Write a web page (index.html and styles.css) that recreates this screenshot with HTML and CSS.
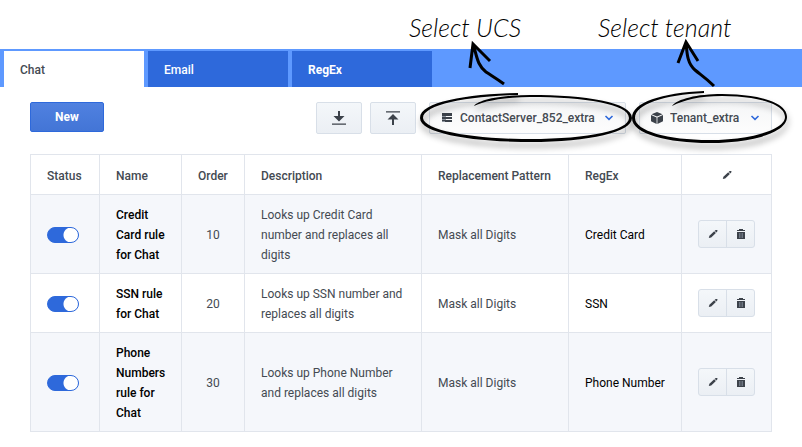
FILE: index.html
```html
<!DOCTYPE html>
<html lang="en">
<head>
  <meta charset="UTF-8">
  <meta name="viewport" content="width=device-width, initial-scale=1.0">
  <title>Masking Rules</title>
  <link rel="stylesheet" href="styles.css">
</head>
<body>
  <!-- Shared icons -->
  <svg class="sprite" aria-hidden="true">
    <symbol id="pencil" viewBox="0 0 10 10">
      <path d="M.8 9 L1.4 6.800 L6.200 2.200 L7.900 3.900 L3.200 8.400 Z M6.700 1.800 L7.800 .9 L9.400 .9 L9.400 2.300 L8.300 3.400 Z"/>
    </symbol>
    <symbol id="trash" viewBox="0 0 10 12">
      <path d="M3 1h4v1h2v1H1V2h2z"/>
      <path d="M1 4h8v7H1z"/>
      <path d="M3.500 5v5 M5 5v5 M6.500 5v5" stroke="#8d99a6" stroke-width=".6"/>
    </symbol>
    <symbol id="chevron" viewBox="0 0 10 8">
      <path d="M1.500 2 L5 5.300 L8.500 2" fill="none" stroke="#2e69db" stroke-width="1.600"/>
    </symbol>
  </svg>

  <nav class="tabs">
    <a class="tab active" href="#chat">Chat</a>
    <a class="tab" href="#email">Email</a>
    <a class="tab strong" href="#regex">RegEx</a>
  </nav>

  <main class="content">
    <div class="toolbar">
      <button type="button" class="btn-new">New</button>

      <div class="transfer">
        <button type="button" class="btn" aria-label="Import">
          <svg width="16" height="16" viewBox="0 0 16 16"><path d="M7 1h2v5h4.500L8 11.500 2.500 6H7z M1 13.500h14v1.300H1z"/></svg>
        </button>
        <button type="button" class="btn" aria-label="Export">
          <svg width="16" height="16" viewBox="0 0 16 16"><path d="M1 1.200h14v1.300H1z M8 4l5.500 5.500H9V15H7V9.500H2.500z"/></svg>
        </button>
      </div>

      <div class="picker server">
        <svg class="picker-icon" width="12" height="12" viewBox="0 0 12 12"><path d="M1 1h10v3H1z M1 5h10v2H1z M1 8h10v2H1z"/><path d="M1 4.500h4 M1 7.500h4 M1 9.500h3" stroke="#8d949d" stroke-width="1"/></svg>
        <select id="server" aria-label="Contact server">
          <option>ContactServer_852_extra</option>
        </select>
        <svg class="chevron" width="10" height="8"><use href="#chevron"/></svg>
        <svg class="callout" width="224" height="120" viewBox="414 36 224 120" aria-hidden="true">
          <path class="ink" d="M518 93 C466 94 420 102 420 118 C420 134 475 142 530 142 C590 142 632 132 632 118 C632 102 585 95 530 95 C500 95 478 100 474 106 C484 101 505 97 530 97 C585 97 629 104 629 118 C629 130 590 139 530 139 C475 139 424 131 423 118 C423 105 466 96 518 95 Z"/>
          <path class="arrow" d="M470 68 L473 44 L490 61 M473 44 C477 56 477 65 486 72 C492 76 497 79 504 84"/>
        </svg>
        <span class="note">Select UCS</span>
      </div>

      <div class="picker tenant">
        <svg class="picker-icon" width="12" height="12" viewBox="0 0 12 12"><path d="M6 0 L11.500 2.200 L6 4.600 L.5 2.200z M0 3.100 L5.600 5.500 V12 L0 9.200z M12 3.100 L6.400 5.500 V12 L12 9.200z"/></svg>
        <select id="tenant" aria-label="Tenant">
          <option>Tenant_extra</option>
        </select>
        <svg class="chevron" width="10" height="8"><use href="#chevron"/></svg>
        <svg class="callout" width="174" height="120" viewBox="624 36 174 120" aria-hidden="true">
          <path class="ink" d="M704 91 C662 93 632 102 632 118 C632 134 668 143 709 143 C754 143 787 132 787 117 C787 102 757 94 722 94 C697 94 677 99 672 106 C684 100 699 96 722 96 C757 96 785 104 785 117 C785 130 750 140 709 140 C668 140 635 131 635 118 C635 104 664 95 704 93 Z"/>
          <path class="arrow" d="M678 63 L686 42 L698 61 M686 42 C687 53 687 63 695 70 C701 75 706 78 714 86"/>
        </svg>
        <span class="note">Select tenant</span>
      </div>
    </div>

    <table class="rules">
      <colgroup>
        <col class="col-status">
        <col class="col-name">
        <col class="col-order">
        <col>
        <col class="col-pattern">
        <col class="col-regex">
        <col class="col-actions">
      </colgroup>
      <thead>
        <tr>
          <th>Status</th>
          <th>Name</th>
          <th>Order</th>
          <th>Description</th>
          <th>Replacement Pattern</th>
          <th>RegEx</th>
          <th class="center" aria-label="Actions"><svg width="10" height="10"><use href="#pencil"/></svg></th>
        </tr>
      </thead>
      <tbody>
        <tr>
          <td><input type="checkbox" class="toggle" aria-label="Credit Card rule enabled" checked></td>
          <td class="name">Credit Card rule for Chat</td>
          <td class="center">10</td>
          <td>Looks up Credit Card number and replaces all digits</td>
          <td>Mask all Digits</td>
          <td class="regex">Credit Card</td>
          <td class="actions">
            <div class="btn-group">
              <button type="button" aria-label="Edit"><svg width="10" height="10"><use href="#pencil"/></svg></button>
              <button type="button" aria-label="Delete"><svg width="10" height="12"><use href="#trash"/></svg></button>
            </div>
          </td>
        </tr>
        <tr>
          <td><input type="checkbox" class="toggle" aria-label="SSN rule enabled" checked></td>
          <td class="name">SSN rule for Chat</td>
          <td class="center">20</td>
          <td>Looks up SSN number and replaces all digits</td>
          <td>Mask all Digits</td>
          <td class="regex">SSN</td>
          <td class="actions">
            <div class="btn-group">
              <button type="button" aria-label="Edit"><svg width="10" height="10"><use href="#pencil"/></svg></button>
              <button type="button" aria-label="Delete"><svg width="10" height="12"><use href="#trash"/></svg></button>
            </div>
          </td>
        </tr>
        <tr>
          <td><input type="checkbox" class="toggle" aria-label="Phone Numbers rule enabled" checked></td>
          <td class="name">Phone Numbers rule for Chat</td>
          <td class="center">30</td>
          <td>Looks up Phone Number and replaces all digits</td>
          <td>Mask all Digits</td>
          <td class="regex">Phone Number</td>
          <td class="actions">
            <div class="btn-group">
              <button type="button" aria-label="Edit"><svg width="10" height="10"><use href="#pencil"/></svg></button>
              <button type="button" aria-label="Delete"><svg width="10" height="12"><use href="#trash"/></svg></button>
            </div>
          </td>
        </tr>
      </tbody>
    </table>
  </main>
</body>
</html>
```
FILE: styles.css
```css
* {
  box-sizing: border-box;
}
body {
  margin: 0;
  padding-top: 49px;
  background: #fff;
  color: #444a52;
  font-family: Roboto, sans-serif;
  font-size: 12px;
  line-height: 20px;
}
button, select, input {
  margin: 0;
  font: inherit;
}
svg {
  fill: #3c424a;
}
.sprite {
  position: absolute;
  width: 0;
  height: 0;
}

/* Tabs */
.tabs {
  display: flex;
  gap: 4px;
  padding: 2px 4px 0;
  background: #5e99ff;
}
.tab {
  width: 140px;
  padding: 9px 16px;
  background: #2e69db;
  color: #fff;
  font-weight: 500;
  text-decoration: none;
  padding-bottom: 7px;
}
.tab.active {
  background: #fff;
  color: #444a52;
}
.tab.strong {
  font-weight: 700;
}

/* Toolbar */
.content {
  padding: 15px 30px;
}
.toolbar {
  display: flex;
  align-items: flex-start;
  gap: 13px;
  margin-bottom: 20px;
}
.btn-new {
  width: 74px;
  height: 30px;
  margin-right: auto;
  border: 1px solid #2e69db;
  border-radius: 2px;
  background: linear-gradient(#5081e0, #4375d6);
  color: #fff;
  font-weight: 700;
}
.transfer {
  display: flex;
  gap: 8px;
}
.btn, .picker {
  height: 32px;
  border: 1px solid #d8dfe8;
  border-radius: 2px;
  background: linear-gradient(#f4f7fa, #ebeff4);
}
.btn {
  display: flex;
  align-items: center;
  justify-content: center;
  width: 46px;
  padding: 0;
}
.picker {
  position: relative;
  display: flex;
  align-items: center;
  gap: 7px;
  padding: 0 11px;
  background: linear-gradient(#f5f6f7, #fdfdfd);
}
.server {
  width: 197px;
}
.tenant {
  width: 133px;
}
.picker-icon, .chevron {
  flex: none;
}
.picker select {
  flex: 1;
  min-width: 0;
  height: 30px;
  padding: 0;
  border: 0;
  appearance: none;
  background: none;
  color: #444a52;
  font-weight: 500;
}

/* Hand-drawn notes over the pickers */
.callout {
  position: absolute;
  top: -67px;
  left: -16px;
  overflow: visible;
  pointer-events: none;
}
.ink {
  fill: #000;
  filter: drop-shadow(1px 5px 3px rgba(0, 0, 0, 0.4));
}
.arrow {
  fill: none;
  stroke: #000;
  stroke-width: 3;
}
.note {
  position: absolute;
  top: -92px;
  left: -21px;
  color: #000;
  font-family: Lato, sans-serif;
  font-size: 25px;
  font-style: italic;
  font-weight: 300;
  line-height: 32px;
  white-space: nowrap;
  pointer-events: none;
}
.tenant .note {
  left: -42px;
}

/* Rules table */
.rules {
  width: 100%;
  border-collapse: collapse;
  table-layout: fixed;
}
.rules th, .rules td {
  padding: 10px 16px 8px;
  border: 1px solid #e1e5ec;
  text-align: left;
  font-weight: 400;
}
.rules th {
  padding-top: 11px;
  font-weight: 500;
}
.rules tbody tr:nth-child(odd) {
  background: #f5f7fb;
}
.rules .name {
  color: #000;
  font-weight: 500;
}
.rules .regex {
  color: #000;
}
.rules .center {
  text-align: center;
}
.rules td.actions {
  padding: 0 16px;
}
.col-status {
  width: 69px;
}
.col-name {
  width: 82px;
}
.col-order {
  width: 63px;
}
.col-pattern {
  width: 147px;
}
.col-regex {
  width: 113px;
}
.col-actions {
  width: 90px;
}
.toggle {
  display: block;
  width: 32px;
  height: 16px;
  appearance: none;
  border: 1px solid #2e69db;
  border-radius: 8px;
  background: radial-gradient(circle at 23px 7px, #fff 7px, #2e69db 8px);
}
.btn-group {
  display: flex;
  width: 57px;
  border: 1px solid #d8dfe8;
  border-radius: 3px;
  background: linear-gradient(#f4f7fa, #ebeff4);
}
.btn-group button {
  display: flex;
  flex: 1;
  align-items: center;
  justify-content: center;
  height: 26px;
  padding: 0;
  border: 0;
  background: none;
}
.btn-group button + button {
  border-left: 1px solid #d8dfe8;
}
```
